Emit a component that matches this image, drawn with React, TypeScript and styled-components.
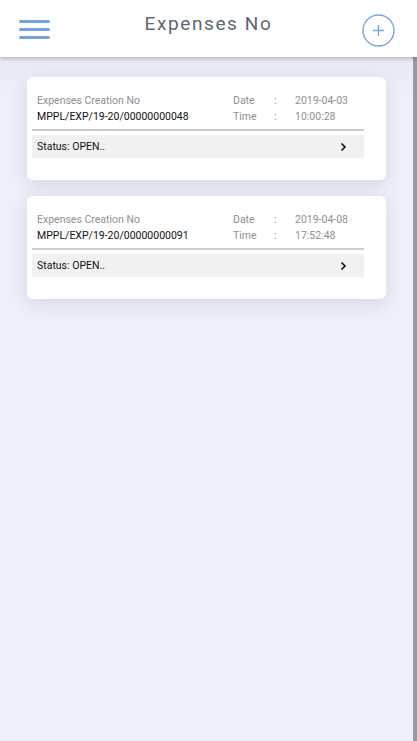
import styled, { createGlobalStyle } from 'styled-components'

const GlobalStyle = createGlobalStyle`
  html, body {
    margin: 0;
    padding: 0;
    background: #edf0f8;
    font-family: Roboto, 'Liberation Sans', sans-serif;
  }
`

interface Expense {
  no: string
  date: string
  time: string
  status: string
}

const expenses: Expense[] = [
  { no: 'MPPL/EXP/19-20/00000000048', date: '2019-04-03', time: '10:00:28', status: 'OPEN..' },
  { no: 'MPPL/EXP/19-20/00000000091', date: '2019-04-08', time: '17:52:48', status: 'OPEN..' },
]

const Page = styled.div`
  width: 417px;
  height: 741px;
  display: flex;
  flex-direction: column;
  overflow: hidden;
`

const Header = styled.header`
  height: 57px;
  flex-shrink: 0;
  background: #fff;
  display: grid;
  grid-template-columns: 60px 1fr 60px;
  align-items: center;
  box-shadow: 0 2px 4px rgba(0, 0, 0, 0.22);
  position: relative;
  z-index: 1;
`

const MenuButton = styled.div`
  display: flex;
  flex-direction: column;
  gap: 5px;
  padding-left: 19px;
  margin-top: 2px;
`

const MenuLine = styled.span`
  display: block;
  width: 31px;
  height: 3px;
  border-radius: 2px;
  background: #74a3e4;
`

const Title = styled.h1`
  margin: 0;
  text-align: center;
  font-size: 19px;
  font-weight: 400;
  letter-spacing: 1.6px;
  color: #5d6772;
  margin-bottom: 10px;
`

const AddButton = styled.div`
  display: flex;
  justify-content: flex-end;
  padding-right: 22px;
  margin-top: 4px;
`

const Body = styled.div`
  flex: 1;
  display: flex;
`

const List = styled.main`
  flex: 1;
  display: flex;
  flex-direction: column;
  gap: 16px;
  padding: 20px 27px;
  background: linear-gradient(#e8ebf2, #edf0f8 40px);
`

const Scrollbar = styled.div`
  width: 4px;
  background: #9a9a9c;
`

const Card = styled.div`
  background: #fff;
  border-radius: 6px;
  box-shadow: 0 5px 18px rgba(60, 70, 90, 0.14);
  padding: 17px 22px 22px 5px;
`

const InfoRow = styled.div`
  display: flex;
  padding: 0 5px 6px;
  border-bottom: 2px solid #c7ccd2;
`

const NoColumn = styled.div`
  flex: 1;
  display: flex;
  flex-direction: column;
  gap: 3px;
`

const Label = styled.span`
  font-size: 10.5px;
  color: #8c9096;
`

const Value = styled.span`
  font-size: 10.5px;
  color: #111;
`

const MetaGrid = styled.div`
  display: grid;
  grid-template-columns: 41px 21px auto;
  row-gap: 3px;
  width: 126px;
  font-size: 10.5px;
  color: #8c9096;
`

const StatusRow = styled.div`
  margin-top: 4px;
  height: 23px;
  background: #f1f1f1;
  display: flex;
  align-items: center;
  justify-content: space-between;
  padding: 0 17px 0 5px;
  font-size: 10.5px;
  color: #111;
`

function ExpenseCard({ expense }: { expense: Expense }) {
  return (
    <Card>
      <InfoRow>
        <NoColumn>
          <Label>Expenses Creation No</Label>
          <Value>{expense.no}</Value>
        </NoColumn>
        <MetaGrid>
          <span>Date</span>
          <span>:</span>
          <span>{expense.date}</span>
          <span>Time</span>
          <span>:</span>
          <span>{expense.time}</span>
        </MetaGrid>
      </InfoRow>
      <StatusRow>
        <span>Status: {expense.status}</span>
        <svg width="7" height="10" viewBox="0 0 7 10">
          <path d="M1.5 1.5 L5 5 L1.5 8.5" stroke="#111" strokeWidth="1.6" fill="none" />
        </svg>
      </StatusRow>
    </Card>
  )
}

export default function App() {
  return (
    <Page>
      <GlobalStyle />
      <Header>
        <MenuButton>
          <MenuLine />
          <MenuLine />
          <MenuLine />
        </MenuButton>
        <Title>Expenses No</Title>
        <AddButton>
          <svg width="33" height="33" viewBox="0 0 33 33">
            <circle cx="16.5" cy="16.5" r="15.5" stroke="#7aa6e4" strokeWidth="1.4" fill="none" />
            <path d="M16.5 11 V22 M11 16.5 H22" stroke="#7aa6e4" strokeWidth="1.4" />
          </svg>
        </AddButton>
      </Header>
      <Body>
        <List>
          {expenses.map((e) => (
            <ExpenseCard key={e.no} expense={e} />
          ))}
        </List>
        <Scrollbar />
      </Body>
    </Page>
  )
}
